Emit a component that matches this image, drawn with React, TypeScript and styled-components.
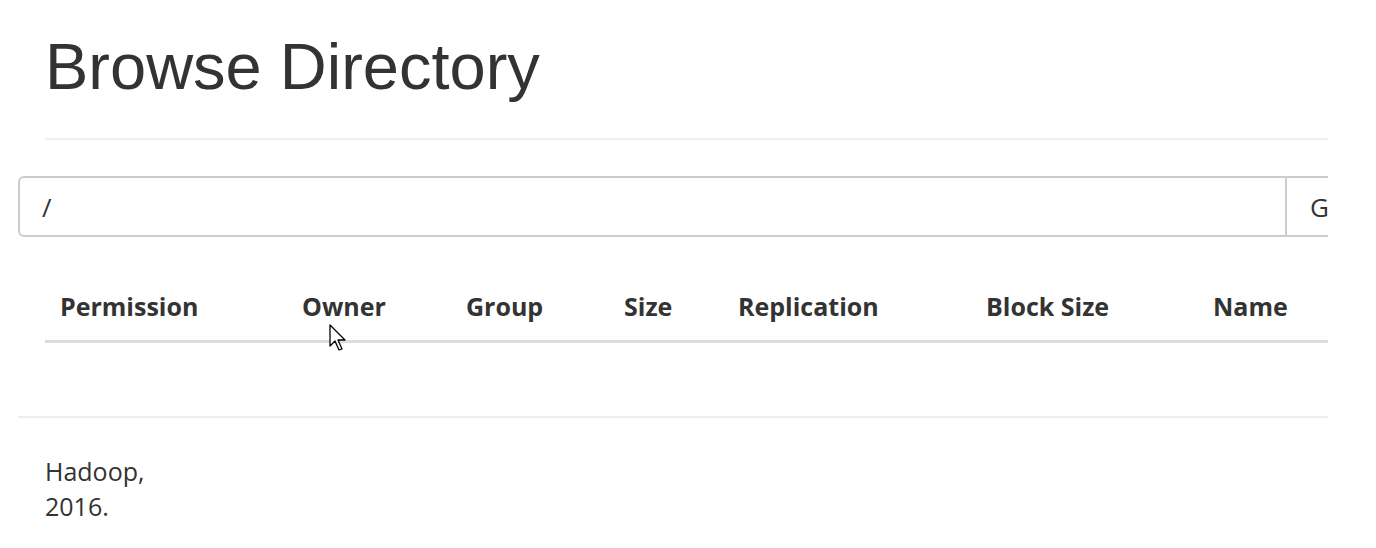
import styled, { createGlobalStyle } from "styled-components";

const GlobalStyle = createGlobalStyle`
  body {
    margin: 0;
    background: #fff;
    color: #333;
  }
`;

const Page = styled.div`
  width: 1328px;
  height: 548px;
  overflow: hidden;
  position: relative;
`;

const Title = styled.h1`
  margin: 0;
  padding: 31px 0 0 45px;
  font-family: "Liberation Sans", Arial, sans-serif;
  font-size: 65px;
  font-weight: 400;
  line-height: 72px;
  color: #333;
`;

const Rule = styled.hr<{ $inset: number; $top: number }>`
  margin: ${({ $top }) => $top}px 0 0 ${({ $inset }) => $inset}px;
  border: 0;
  border-top: 2px solid #eee;
  height: 0;
`;

const InputGroup = styled.div`
  display: flex;
  margin: 36px 0 0 18px;
  height: 61px;
  width: 1400px;
`;

const PathInput = styled.div`
  flex: none;
  width: 1269px;
  box-sizing: border-box;
  display: flex;
  align-items: center;
  padding-left: 22px;
  border: 2px solid #ccc;
  border-radius: 6px 0 0 6px;
  font-family: "Open Sans", "Noto Sans", sans-serif;
  font-size: 26px;
  color: #333;
`;

const GoButton = styled.div`
  flex: none;
  width: 90px;
  display: flex;
  align-items: center;
  padding-left: 23px;
  border: 2px solid #ccc;
  border-left: 0;
  font-family: "Open Sans", "Noto Sans", sans-serif;
  font-size: 26px;
  color: #333;
`;

const Table = styled.div`
  margin: 44px 0 0 45px;
`;

const HeadRow = styled.div`
  display: flex;
  height: 51px;
  padding-top: 8px;
  align-items: flex-start;
  border-bottom: 3px solid #ddd;
  font-family: "Open Sans", "Noto Sans", sans-serif;
  font-size: 25px;
  line-height: 34px;
  font-weight: 700;
  color: #333;
`;

const HeadCell = styled.div<{ $w: number }>`
  flex: none;
  width: ${({ $w }) => $w}px;
  padding-left: 15px;
  box-sizing: border-box;
  white-space: nowrap;
`;

const Footer = styled.footer`
  padding: 36px 0 0 45px;
  font-family: "Open Sans", "Noto Sans", sans-serif;
  font-size: 25px;
  line-height: 35px;
  color: #333;
`;

const Cursor = styled.svg`
  position: absolute;
  left: 329px;
  top: 324px;
`;

const columns: [string, number][] = [
  ["Permission", 242],
  ["Owner", 164],
  ["Group", 158],
  ["Size", 114],
  ["Replication", 248],
  ["Block Size", 227],
  ["Name", 200],
];

export default function App() {
  return (
    <Page>
      <GlobalStyle />
      <Title>Browse Directory</Title>
      <Rule $inset={45} $top={35} />
      <InputGroup>
        <PathInput>/</PathInput>
        <GoButton>Go!</GoButton>
      </InputGroup>
      <Table>
        <HeadRow>
          {columns.map(([label, w]) => (
            <HeadCell key={label} $w={w}>
              {label}
            </HeadCell>
          ))}
        </HeadRow>
      </Table>
      <Rule $inset={18} $top={73} />
      <Footer>
        Hadoop,
        <br />
        2016.
      </Footer>
      <Cursor width="20" height="30" viewBox="0 0 20 30">
        <path
          d="M1 1 L1 22 L6 17 L10 26 L13 25 L9 16 L16 16 Z"
          fill="#fff"
          stroke="#000"
          strokeWidth="1.3"
          strokeLinejoin="round"
        />
      </Cursor>
    </Page>
  );
}
